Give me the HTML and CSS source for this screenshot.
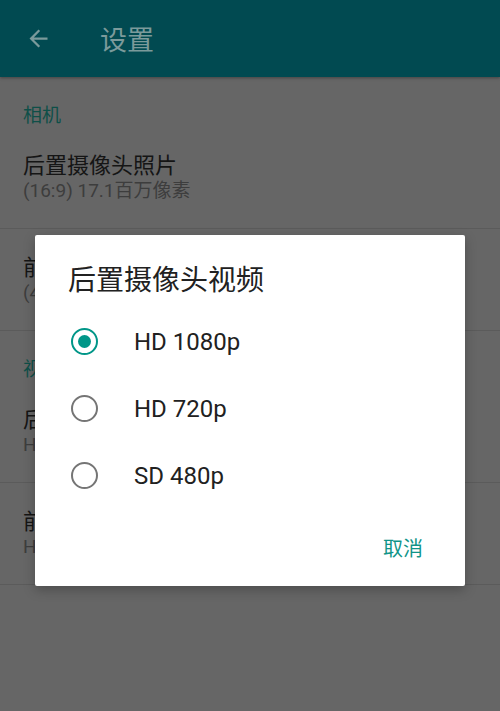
FILE: index.html
```html
<!DOCTYPE html>
<html lang="zh">
<head>
<meta charset="utf-8">
<title>设置</title>
<link rel="stylesheet" href="styles.css">
</head>
<body>
<div class="page">
  <header class="appbar">
    <svg class="back" width="26" height="26" viewBox="0 0 24 24"><path d="M20 11H7.83l5.59-5.59L12 4l-8 8 8 8 1.41-1.41L7.83 13H20v-2z" fill="currentColor"/></svg>
    <h1 class="appbar-title">设置</h1>
  </header>
  <div class="category">相机</div>
  <div class="item">
    <div class="item-title">后置摄像头照片</div>
    <div class="item-sub">(16:9) 17.1百万像素</div>
  </div>
  <div class="item">
    <div class="item-title">前置摄像头照片</div>
    <div class="item-sub">(4:3) 8.0百万像素</div>
  </div>
  <div class="category">视频</div>
  <div class="item">
    <div class="item-title">后置摄像头视频</div>
    <div class="item-sub">HD 1080p</div>
  </div>
  <div class="item">
    <div class="item-title">前置摄像头视频</div>
    <div class="item-sub">HD 720p</div>
  </div>
</div>

<div class="dialog">
  <h2 class="dialog-title">后置摄像头视频</h2>
  <ul class="options">
    <li class="option"><span class="radio checked"></span><span class="option-label">HD 1080p</span></li>
    <li class="option"><span class="radio"></span><span class="option-label">HD 720p</span></li>
    <li class="option"><span class="radio"></span><span class="option-label">SD 480p</span></li>
  </ul>
  <div class="actions"><button class="btn">取消</button></div>
</div>
</body>
</html>
```
FILE: styles.css
```css
html, body {
  margin: 0;
  padding: 0;
}
body {
  width: 500px;
  height: 711px;
  overflow: hidden;
  background: #666666;
  font-family: "Noto Sans CJK SC", Roboto, sans-serif;
  position: relative;
}
.page {
  display: flex;
  flex-direction: column;
}
.appbar {
  height: 77px;
  background: #014a51;
  display: flex;
  align-items: center;
  color: #7b9a9b;
  box-shadow: 0 1px 3px rgba(0,0,0,0.35);
  position: relative;
}
.back {
  margin-left: 25px;
  width: 27px;
  height: 27px;
}
.appbar-title {
  margin: 0 0 0 48px;
  font-size: 27px;
  font-weight: 400;
  line-height: 34px;
}
.category {
  height: 50px;
  box-sizing: border-box;
  padding: 25px 0 0 23px;
  font-size: 19px;
  line-height: 24px;
  color: #0e4f48;
}
.item {
  height: 102px;
  box-sizing: border-box;
  padding: 22px 0 0 23px;
  border-bottom: 1px solid #5b5b5b;
}
.item-title {
  font-size: 22px;
  line-height: 28px;
  color: #151515;
}
.item-sub {
  font-family: Roboto, "Noto Sans CJK SC", sans-serif;
  font-size: 19px;
  line-height: 28px;
  color: #3d3d3d;
}
.dialog {
  position: absolute;
  left: 35px;
  top: 235px;
  width: 430px;
  height: 351px;
  box-sizing: border-box;
  background: #ffffff;
  border-radius: 2px;
  box-shadow: 0 4px 12px rgba(0,0,0,0.25);
  display: flex;
  flex-direction: column;
}
.dialog-title {
  margin: 0;
  padding: 25px 0 0 33px;
  font-size: 28px;
  font-weight: 400;
  line-height: 36px;
  color: #212121;
}
.options {
  list-style: none;
  margin: 12px 0 0 0;
  padding: 0;
}
.option {
  height: 67px;
  display: flex;
  align-items: center;
  padding-left: 36px;
}
.radio {
  width: 27px;
  height: 27px;
  box-sizing: border-box;
  border: 2.8px solid #757575;
  border-radius: 50%;
  display: flex;
  align-items: center;
  justify-content: center;
}
.radio.checked {
  border-color: #009688;
}
.radio.checked::after {
  content: "";
  width: 13px;
  height: 13px;
  border-radius: 50%;
  background: #009688;
}
.option-label {
  margin-left: 36px;
  font-family: Roboto, sans-serif;
  font-size: 24px;
  color: #212121;
}
.actions {
  display: flex;
  justify-content: flex-end;
  margin-top: 14px;
  padding-right: 26px;
}
.btn {
  border: none;
  background: none;
  height: 48px;
  padding: 0 16px;
  font-family: "Noto Sans CJK SC", sans-serif;
  font-size: 20px;
  color: #0f9488;
}
```
